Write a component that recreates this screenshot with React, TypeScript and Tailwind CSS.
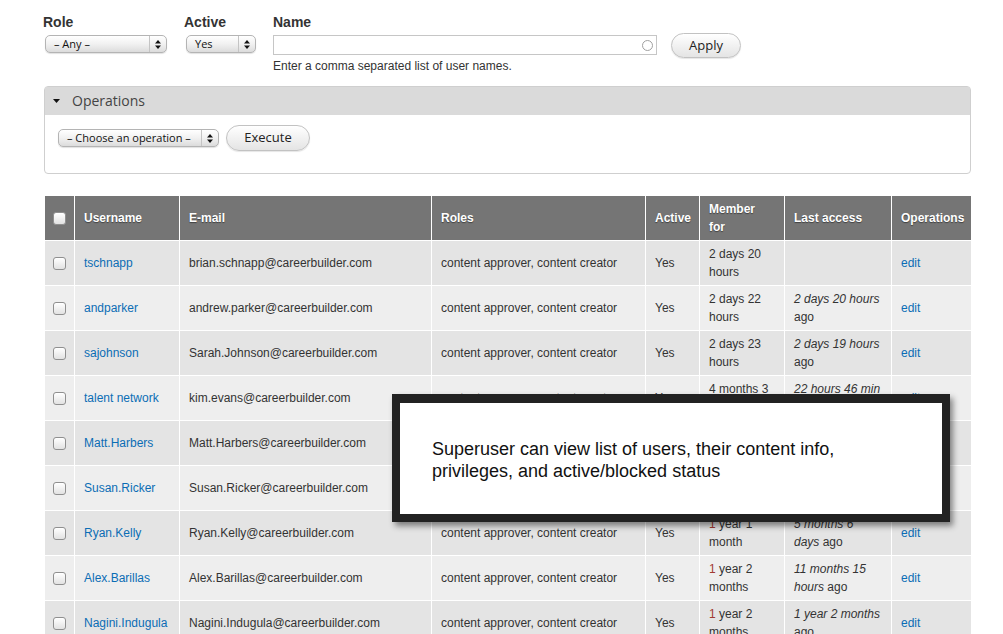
import type { ReactNode } from 'react';

type UserRow = {
  user: string;
  email: string;
  roles: string;
  active: string;
  member: string[];
  access: [string, string][];
};

const rows: UserRow[] = [
  { user: 'tschnapp', email: 'brian.schnapp@careerbuilder.com', roles: 'content approver, content creator', active: 'Yes', member: ['2 days 20', 'hours'], access: [] },
  { user: 'andparker', email: 'andrew.parker@careerbuilder.com', roles: 'content approver, content creator', active: 'Yes', member: ['2 days 22', 'hours'], access: [['2 days 20 hours', ''], ['', 'ago']] },
  { user: 'sajohnson', email: 'Sarah.Johnson@careerbuilder.com', roles: 'content approver, content creator', active: 'Yes', member: ['2 days 23', 'hours'], access: [['2 days 19 hours', ''], ['', 'ago']] },
  { user: 'talent network', email: 'kim.evans@careerbuilder.com', roles: 'content approver, content creator', active: 'Yes', member: ['4 months 3', 'weeks'], access: [['22 hours 46 min', ''], ['', 'ago']] },
  { user: 'Matt.Harbers', email: 'Matt.Harbers@careerbuilder.com', roles: 'content approver, content creator', active: 'Yes', member: ['4 months 3', 'weeks'], access: [['1 month 1 week', ''], ['', 'ago']] },
  { user: 'Susan.Ricker', email: 'Susan.Ricker@careerbuilder.com', roles: 'content approver, content creator', active: 'Yes', member: ['4 months 3', 'weeks'], access: [['3 months 2', ''], ['weeks', ' ago']] },
  { user: 'Ryan.Kelly', email: 'Ryan.Kelly@careerbuilder.com', roles: 'content approver, content creator', active: 'Yes', member: ['1 year 1', 'month'], access: [['5 months 6', ''], ['days', ' ago']] },
  { user: 'Alex.Barillas', email: 'Alex.Barillas@careerbuilder.com', roles: 'content approver, content creator', active: 'Yes', member: ['1 year 2', 'months'], access: [['11 months 15', ''], ['hours', ' ago']] },
  { user: 'Nagini.Indugula', email: 'Nagini.Indugula@careerbuilder.com', roles: 'content approver, content creator', active: 'Yes', member: ['1 year 2', 'months'], access: [['1 year 2 months', ''], ['', 'ago']] },
];

function Arrows() {
  return (
    <svg width="6" height="9" viewBox="0 0 6 9" className="fill-[#111]">
      <path d="M3 0 L6 3.5 L0 3.5 Z" />
      <path d="M0 5.5 L6 5.5 L3 9 Z" />
    </svg>
  );
}

function FakeSelect({ label, className }: { label: string; className: string }) {
  return (
    <div className={`flex h-[18px] items-stretch rounded-[5px] border border-[#b4b4b4] bg-linear-to-b from-white via-[#f1f1f1] to-[#dcdcdc] shadow-[0_1px_1px_rgba(0,0,0,0.12)] ${className}`}>
      <span className="flex-1 truncate pl-[8px] font-['Open_Sans',sans-serif] text-[11px] leading-[16px] text-[#111]">{label}</span>
      <span className="flex w-[17px] items-center justify-center border-l border-[#c4c4c4]">
        <Arrows />
      </span>
    </div>
  );
}

function PillButton({ children, className }: { children: ReactNode; className: string }) {
  return (
    <button className={`rounded-full border border-[#c2c2c2] bg-linear-to-b from-white to-[#e4e4e4] font-['Open_Sans',sans-serif] text-[13px] text-[#222] shadow-[0_1px_1px_rgba(0,0,0,0.1)] ${className}`}>
      {children}
    </button>
  );
}

function Checkbox() {
  return (
    <span className="mx-auto block h-[13px] w-[13px] rounded-[3px] border border-[#8f8f8f] bg-linear-to-b from-white to-[#e2e2e2] shadow-[inset_0_1px_1px_rgba(255,255,255,0.8)]" />
  );
}

function MemberFor({ lines }: { lines: string[] }) {
  return (
    <>
      {lines.map((line, i) =>
        i === 0 && line.startsWith('1 year') ? (
          <div key={i}>
            <span className="text-[#a13a32]">1</span>
            {line.slice(1)}
          </div>
        ) : (
          <div key={i}>{line}</div>
        ),
      )}
    </>
  );
}

export default function App() {
  return (
    <div className="relative h-screen overflow-hidden bg-white pl-[44px] pt-[13px] font-['Liberation_Sans',Arial,sans-serif] text-[#333]">
      {/* filters */}
      <div className="flex h-[62px] items-start">
        <div className="-ml-px w-[141px]">
          <div className="text-[14px] font-bold leading-[18px] text-[#333]">Role</div>
          <FakeSelect label="– Any –" className="ml-[2px] mt-[4px] w-[122px]" />
        </div>
        <div className="w-[89px]">
          <div className="text-[14px] font-bold leading-[18px]">Active</div>
          <FakeSelect label="Yes" className="ml-[2px] mt-[4px] w-[70px]" />
        </div>
        <div className="w-[384px]">
          <div className="text-[14px] font-bold leading-[18px]">Name</div>
          <div className="mt-[4px] flex h-[20px] items-center justify-end border border-[#c6c6c6] bg-white pr-[3px]">
            <span className="h-[11px] w-[11px] rounded-full border-[1.5px] border-[#a0a0a0]" />
          </div>
          <div className="mt-[2px] text-[12px] leading-[18px] text-[#333]">Enter a comma separated list of user names.</div>
        </div>
        <PillButton className="ml-[14px] mt-[20px] h-[25px] w-[70px]">Apply</PillButton>
      </div>

      {/* operations fieldset */}
      <div className="mt-[11px] w-[927px] rounded-[4px] border border-[#cfcfcf]">
        <div className="flex h-[28px] items-center bg-[#dadada] pl-[8px]">
          <svg width="7" height="4" viewBox="0 0 7 4" className="fill-[#111]">
            <path d="M0 0 L7 0 L3.5 4 Z" />
          </svg>
          <span className="ml-[12px] font-['Open_Sans',sans-serif] text-[14px] leading-[18px] text-[#444]">Operations</span>
        </div>
        <div className="flex items-center pb-[22px] pl-[13px] pt-[10px]">
          <FakeSelect label="– Choose an operation –" className="w-[161px]" />
          <PillButton className="ml-[7px] h-[26px] w-[84px]">Execute</PillButton>
        </div>
      </div>

      {/* user table */}
      <table className="mt-[21px] w-[927px] table-fixed border-collapse text-[12px] leading-[18px]">
        <colgroup>
          <col className="w-[30px]" />
          <col className="w-[105px]" />
          <col className="w-[252px]" />
          <col className="w-[214px]" />
          <col className="w-[54px]" />
          <col className="w-[85px]" />
          <col className="w-[107px]" />
          <col className="w-[80px]" />
        </colgroup>
        <thead>
          <tr className="h-[45px] bg-[#757575] text-left font-bold text-white [text-shadow:0_1px_1px_rgba(0,0,0,0.45)]">
            <th className="border border-white px-0">
              <Checkbox />
            </th>
            <th className="border border-white px-[9px]">Username</th>
            <th className="border border-white px-[9px]">E-mail</th>
            <th className="border border-white px-[9px]">Roles</th>
            <th className="border border-white px-[9px]">Active</th>
            <th className="border border-white px-[9px]">
              Member
              <br />
              for
            </th>
            <th className="border border-white px-[9px]">Last access</th>
            <th className="border border-white px-[9px]">Operations</th>
          </tr>
        </thead>
        <tbody>
          {rows.map((r, i) => (
            <tr key={r.user} className={`h-[45px] ${i % 2 === 0 ? 'bg-[#e4e4e4]' : 'bg-[#eeeeee]'}`}>
              <td className="border border-white">
                <Checkbox />
              </td>
              <td className="whitespace-nowrap border border-white px-[9px] text-[#0b6db5]">{r.user}</td>
              <td className="whitespace-nowrap border border-white px-[9px]">{r.email}</td>
              <td className="whitespace-nowrap border border-white px-[9px]">{r.roles}</td>
              <td className="border border-white px-[9px]">{r.active}</td>
              <td className="border border-white px-[9px]">
                <MemberFor lines={r.member} />
              </td>
              <td className="border border-white px-[9px]">
                {r.access.map(([em, rest], j) => (
                  <div key={j} className="whitespace-nowrap">
                    {em && <em>{em}</em>}
                    {rest}
                  </div>
                ))}
              </td>
              <td className="border border-white px-[9px] text-[#0b6db5]">edit</td>
            </tr>
          ))}
        </tbody>
      </table>

      {/* annotation callout */}
      <div className="absolute left-[392px] top-[394px] h-[128px] w-[558px] border-[8px] border-t-[9px] border-[#222] bg-white pl-[32px] pt-[35px] shadow-[3px_4px_6px_rgba(0,0,0,0.45)]">
        <p className="text-[18px] leading-[22px] text-[#111]">
          Superuser can view list of users, their content info,
          <br />
          privileges, and active/blocked status
        </p>
      </div>
    </div>
  );
}
